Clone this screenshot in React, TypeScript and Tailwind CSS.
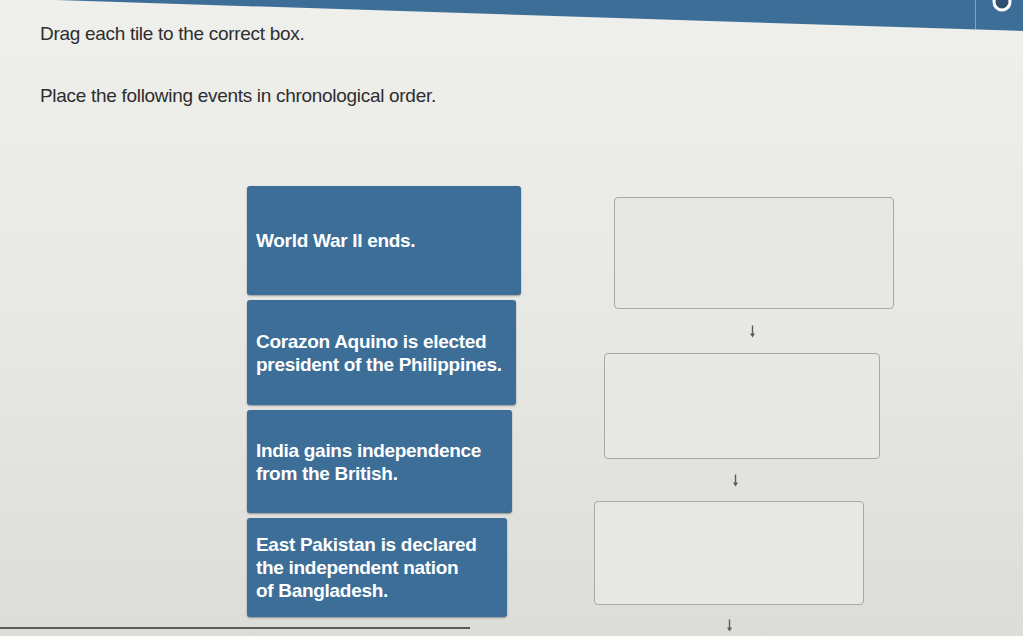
import React from "react";

const events = [
  { id: "ww2", lines: ["World War II ends."], cls: "h-[109px] w-[274px]" },
  { id: "aquino", lines: ["Corazon Aquino is elected", "president of the Philippines."], cls: "h-[105px] w-[269px]" },
  { id: "india", lines: ["India gains independence", "from the British."], cls: "h-[103px] w-[265px]" },
  { id: "bangladesh", lines: ["East Pakistan is declared", "the independent nation", "of Bangladesh."], cls: "h-[99px] w-[260px]" },
];

function Tile({ lines, cls }: { lines: string[]; cls: string }) {
  return (
    <div
      className={`${cls} rounded-[3px] bg-[#3c6e98] flex flex-col justify-center pl-[9px] shadow-[0_1px_2px_rgba(0,0,0,0.35)]`}
    >
      {lines.map((l) => (
        <div key={l} className="text-white font-bold text-[19px] leading-[23px] tracking-[-0.3px] whitespace-nowrap">
          {l}
        </div>
      ))}
    </div>
  );
}

function DropSlot({ cls }: { cls: string }) {
  return <div className={`${cls} rounded-[4px] border-[1.5px] border-[#a8a9a5] bg-[#e7e7e4]`} />;
}

function Arrow({ cls }: { cls: string }) {
  return (
    <div className={`${cls} flex items-center justify-center`}>
      <svg width="7" height="13" viewBox="0 0 7 13">
        <path d="M3.5 0.5 V11" stroke="#5a5a5a" strokeWidth="1.4" />
        <path d="M1 8.5 L3.5 12.5 L6 8.5 Z" fill="#5a5a5a" />
      </svg>
    </div>
  );
}

export default function App() {
  return (
    <div
      className="relative w-[1023px] h-[636px] overflow-hidden bg-gradient-to-b from-[#efefec] via-[#e8e8e5] to-[#dcdcd8] text-[#2e2e2e]"
      style={{ fontFamily: '"Liberation Sans", Arial, sans-serif' }}
    >
      {/* top app bar, slanted */}
      <div className="absolute left-0 top-0 w-full h-[31px] bg-[#3d6e98] [clip-path:polygon(5.5%_0,100%_0,100%_100%)]" />
      <div className="absolute left-[975px] top-0 w-px h-[29px] bg-[#7fa2c0]" />
      <svg className="absolute left-[990px] top-[-10px]" width="24" height="24" viewBox="0 0 24 24">
        <circle cx="12" cy="12" r="8" fill="#2f4f6e" stroke="#ffffff" strokeWidth="3" />
      </svg>

      <div className="pl-[40px] pt-[23px]">
        <p className="text-[19px] leading-[22px] tracking-[-0.3px]">Drag each tile to the correct box.</p>
        <p className="mt-[40px] text-[19px] leading-[22px] tracking-[-0.3px]">
          Place the following events in chronological order.
        </p>
      </div>

      <div className="flex pl-[247px] pt-[79px]">
        <div className="flex flex-col gap-[5px]">
          {events.map((e) => (
            <Tile key={e.id} lines={e.lines} cls={e.cls} />
          ))}
        </div>
        <div className="ml-[83px] mt-[11px] flex flex-col items-start">
          <DropSlot cls="ml-[10px] h-[112px] w-[280px]" />
          <Arrow cls="w-[296px] h-[44px]" />
          <DropSlot cls="h-[106px] w-[276px]" />
          <Arrow cls="w-[262px] h-[42px]" />
          <DropSlot cls="-ml-[10px] h-[104px] w-[270px]" />
          <Arrow cls="-ml-[10px] w-[270px] h-[40px]" />
        </div>
      </div>

      {/* bezel edge near the bottom */}
      <div className="absolute left-0 bottom-[7px] w-[470px] h-[2px] bg-[#5a5a58]" />
    </div>
  );
}
